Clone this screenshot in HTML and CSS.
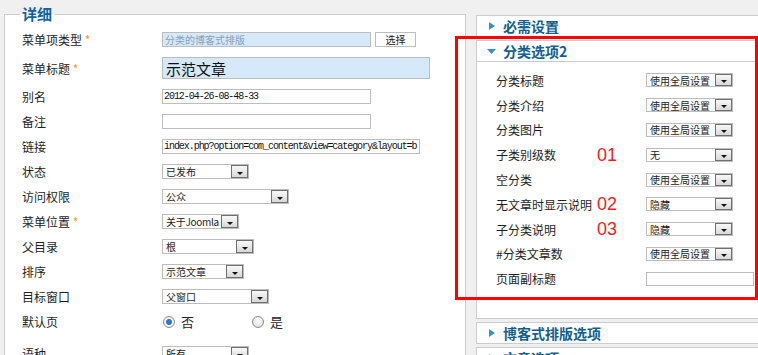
FILE: index.html
```html
<!DOCTYPE html>
<html lang="zh">
<head>
    <meta charset="utf-8">
    <title>菜单项编辑</title>
    <link rel="stylesheet" href="styles.css">
</head>
<body>
<div class="page">
    <fieldset class="details">
        <legend>详细</legend>

        <div class="row">
            <div class="label">菜单项类型 <span class="star">*</span></div>
            <input class="text readonly w209" value="分类的博客式排版" readonly>
            <button class="btn">选择</button>
        </div>
        <div class="row tall">
            <div class="label">菜单标题 <span class="star">*</span></div>
            <input class="text title" value="示范文章">
        </div>
        <div class="row">
            <div class="label">别名</div>
            <input class="text mono w209" value="2012-04-26-08-48-33">
        </div>
        <div class="row">
            <div class="label">备注</div>
            <input class="text w209" value="">
        </div>
        <div class="row">
            <div class="label">链接</div>
            <input class="text mono w258" value="index.php?option=com_content&amp;view=category&amp;layout=b">
        </div>
        <div class="row">
            <div class="label">状态</div>
            <div class="select w87"><span class="value">已发布</span><span class="arrow"></span></div>
        </div>
        <div class="row">
            <div class="label">访问权限</div>
            <div class="select w127"><span class="value">公众</span><span class="arrow"></span></div>
        </div>
        <div class="row">
            <div class="label">菜单位置 <span class="star">*</span></div>
            <div class="select w77"><span class="value narrow">关于Joomla</span><span class="arrow"></span></div>
        </div>
        <div class="row">
            <div class="label">父目录</div>
            <div class="select w92"><span class="value">根</span><span class="arrow"></span></div>
        </div>
        <div class="row">
            <div class="label">排序</div>
            <div class="select w82"><span class="value">示范文章</span><span class="arrow"></span></div>
        </div>
        <div class="row">
            <div class="label">目标窗口</div>
            <div class="select w107"><span class="value">父窗口</span><span class="arrow"></span></div>
        </div>
        <div class="row">
            <div class="label">默认页</div>
            <label class="radio-opt"><input type="radio" name="home" checked>否</label>
            <label class="radio-opt"><input type="radio" name="home">是</label>
        </div>
        <div class="row lang">
            <div class="label">语种</div>
            <div class="select w87"><span class="value">所有</span><span class="arrow"></span></div>
        </div>
    </fieldset>

    <div class="sliders">
        <div class="panel">
            <div class="panel-head">
                <svg class="tri-right" viewBox="0 0 6 8"><polygon points="0,0 6,4 0,8" /></svg>
                必需设置
            </div>
        </div>
        <div class="panel open">
            <div class="panel-head">
                <svg class="tri-down" viewBox="0 0 9 5"><polygon points="0,0 9,0 4.5,5" /></svg>
                分类选项2
            </div>
            <div class="panel-body">
                <div class="opt">
                    <div>分类标题</div><span class="note"></span>
                    <div class="select small"><span class="value">使用全局设置</span><span class="arrow"></span></div>
                </div>
                <div class="opt">
                    <div>分类介绍</div><span class="note"></span>
                    <div class="select small"><span class="value">使用全局设置</span><span class="arrow"></span></div>
                </div>
                <div class="opt">
                    <div>分类图片</div><span class="note"></span>
                    <div class="select small"><span class="value">使用全局设置</span><span class="arrow"></span></div>
                </div>
                <div class="opt">
                    <div>子类别级数</div><span class="note">01</span>
                    <div class="select small"><span class="value">无</span><span class="arrow"></span></div>
                </div>
                <div class="opt">
                    <div>空分类</div><span class="note"></span>
                    <div class="select small"><span class="value">使用全局设置</span><span class="arrow"></span></div>
                </div>
                <div class="opt">
                    <div>无文章时显示说明</div><span class="note">02</span>
                    <div class="select small"><span class="value">隐藏</span><span class="arrow"></span></div>
                </div>
                <div class="opt">
                    <div>子分类说明</div><span class="note">03</span>
                    <div class="select small"><span class="value">隐藏</span><span class="arrow"></span></div>
                </div>
                <div class="opt">
                    <div>#分类文章数</div><span class="note"></span>
                    <div class="select small"><span class="value">使用全局设置</span><span class="arrow"></span></div>
                </div>
                <div class="opt">
                    <div>页面副标题</div><span class="note"></span>
                    <input class="text subtitle" value="">
                </div>
            </div>
        </div>
        <div class="panel">
            <div class="panel-head">
                <svg class="tri-right" viewBox="0 0 6 8"><polygon points="0,0 6,4 0,8" /></svg>
                博客式排版选项
            </div>
        </div>
        <div class="panel">
            <div class="panel-head">
                <svg class="tri-right" viewBox="0 0 6 8"><polygon points="0,0 6,4 0,8" /></svg>
                文章选项
            </div>
        </div>
    </div>

    <!-- Markierung der Kategorie-Optionen -->
    <div class="highlight"></div>
</div>
</body>
</html>
```

FILE: styles.css
```css
body {
    margin: 0;
    background-color: #f0f0f0;
    font-family: "Noto Sans CJK SC", "Liberation Sans", sans-serif;
    font-size: 12px;
    color: #1e1e1e;
    overflow: hidden;
}

.page {
    display: flex;
    align-items: flex-start;
    position: relative;
    width: 758px;
    height: 355px;
}

/* linke Spalte */

.details {
    flex: none;
    box-sizing: border-box;
    width: 462px;
    min-height: 360px;
    margin: 5px 0 0 4px;
    padding: 4px 0 0 17px;
    border: 1px solid #cccccc;
    border-bottom: none;
    background-color: #fff;
}

.details legend {
    font-size: 15px;
    line-height: 18px;
    font-weight: bold;
    color: #15629a;
    padding: 0 2px;
    margin-left: -2px;
}

.row {
    display: flex;
    align-items: center;
    height: 25px;
}

.row.tall {
    height: 32px;
}

.row.lang {
    margin-top: 7px;
}

.row .label {
    flex: none;
    width: 140px;
    white-space: nowrap;
}

.star {
    color: #f39a2b;
}

.text {
    box-sizing: border-box;
    height: 15px;
    margin: 0;
    padding: 0 2px;
    border: 1px solid #bdbdbd;
    background-color: #fff;
    font-family: "Noto Sans CJK SC", sans-serif;
    font-size: 10px;
    color: #222;
    outline: none;
}

.w209 {
    width: 209px;
}

.w258 {
    width: 258px;
}

.text.readonly {
    background-color: #d6e9fa;
    color: #8b9db3;
}

.text.title {
    width: 268px;
    height: 22px;
    padding: 0 3px;
    background-color: #d6e9fa;
    font-size: 15px;
    color: #111;
}

.text.mono {
    padding: 0 1px;
    font-family: "Liberation Mono", monospace;
    font-size: 10px;
    letter-spacing: -1.05px;
    color: #111;
}

.btn {
    box-sizing: border-box;
    width: 41px;
    height: 15px;
    margin-left: 4px;
    padding: 0;
    border: 1px solid #bdbdbd;
    background-color: #fff;
    font-family: "Noto Sans CJK SC", sans-serif;
    font-size: 10px;
    line-height: 13px;
    color: #222;
}

.select {
    display: flex;
    align-items: center;
    box-sizing: border-box;
    height: 15px;
    padding-left: 3px;
    border: 1px solid #bdbdbd;
    background-color: #fff;
    font-size: 10px;
    color: #222;
}

.select .value {
    flex: 1;
    overflow: hidden;
    white-space: nowrap;
    line-height: 13px;
}

.select .value.narrow {
    letter-spacing: -0.3px;
}

.select .arrow {
    flex: none;
    display: flex;
    align-items: flex-end;
    justify-content: center;
    box-sizing: border-box;
    width: 17px;
    height: 13px;
    padding-bottom: 2px;
    border: 1px solid #6f6f6f;
    background: linear-gradient(#f8f8f8, #d8d8d8);
}

.select .arrow::after {
    content: "";
    border-left: 3px solid transparent;
    border-right: 3px solid transparent;
    border-top: 3px solid #111;
}

.w77 { width: 77px; }
.w82 { width: 82px; }
.w87 { width: 87px; }
.w92 { width: 92px; }
.w107 { width: 107px; }
.w127 { width: 127px; }

.radio-opt {
    display: flex;
    align-items: center;
    width: 89px;
    font-size: 13px;
}

.radio-opt input {
    appearance: none;
    box-sizing: border-box;
    width: 12px;
    height: 12px;
    margin: 0 6px 0 1px;
    border: 1px solid #8c8c8c;
    border-radius: 50%;
    background: radial-gradient(circle at 50% 40%, #ffffff, #d9d9d9);
}

.radio-opt input:checked {
    background: radial-gradient(circle, #2a78d6 0 2.5px, #7fb3ea 3px, #f4f4f4 3.5px);
}

/* rechte Spalte */

.sliders {
    flex: 1;
    min-width: 0;
    margin: 15px -3px 0 10px;
}

.panel {
    border: 1px solid #cccccc;
    background-color: #fff;
    margin-bottom: 3px;
}

.panel-head {
    display: flex;
    align-items: center;
    height: 20px;
    padding-left: 12px;
    font-size: 14px;
    font-weight: bold;
    color: #135e8e;
}

.panel-head svg {
    fill: #3a8fc6;
}

.tri-right {
    width: 6px;
    height: 8px;
    margin-right: 8px;
}

.tri-down {
    width: 9px;
    height: 5px;
    margin: 0 7px 0 -2px;
}

.panel.open .panel-head {
    border-bottom: 1px solid #cccccc;
}

.panel-body {
    box-sizing: border-box;
    height: 256px;
    padding: 6px 0 0 19px;
}

.opt {
    display: grid;
    grid-template-columns: 101px 49px auto;
    align-items: center;
    height: 24.8px;
    white-space: nowrap;
}

.note {
    font-family: "Liberation Sans", sans-serif;
    font-size: 18px;
    line-height: 1;
    color: #f01c1c;
}

.select.small {
    width: 87px;
    height: 14px;
}

.select.small .arrow {
    height: 12px;
}

.text.subtitle {
    width: 108px;
    height: 14px;
}

.highlight {
    position: absolute;
    left: 455px;
    top: 36px;
    width: 303px;
    height: 264px;
    box-sizing: border-box;
    border: 3px solid #ff0000;
    pointer-events: none;
}
```
